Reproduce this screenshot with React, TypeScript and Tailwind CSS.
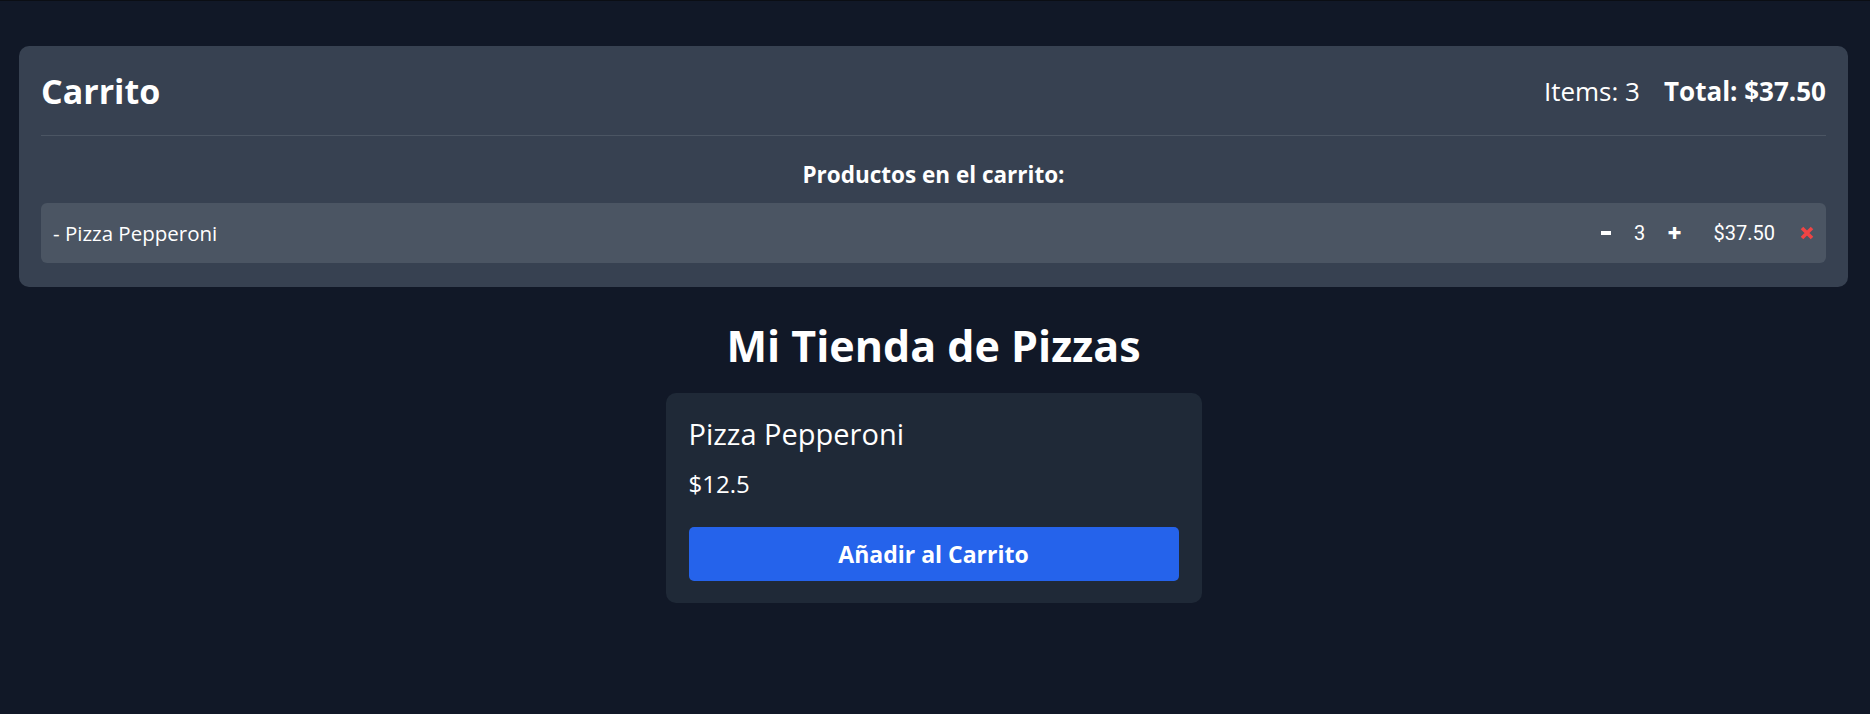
import React from "react";

type CartItem = { name: string; qty: number; price: number };

const cart: CartItem[] = [{ name: "Pizza Pepperoni", qty: 3, price: 12.5 }];

function RemoveIcon() {
    return (
        <svg width="14" height="14" viewBox="0 0 14 14" aria-hidden="true">
            <path d="M2 2 L12 12 M12 2 L2 12" stroke="#ef4444" strokeWidth="3.6" strokeLinecap="butt" />
        </svg>
    );
}

export default function App() {
    const items = cart.reduce((n, i) => n + i.qty, 0);
    const total = cart.reduce((n, i) => n + i.qty * i.price, 0);

    return (
        <div className="min-h-screen border-t border-[#0b0e14] bg-[#111827] pl-[19px] pr-[22px] pt-[45px] font-['Open_Sans',sans-serif] text-white">
            {/* carrito */}
            <div className="rounded-[10px] bg-[#374151] px-[22px] pt-[23px] pb-[24px]">
                <div className="flex h-[43px] items-center justify-between">
                    <h2 className="text-[34px] font-bold leading-none">Carrito</h2>
                    <div className="flex items-center gap-[24px] leading-none">
                        <span className="text-[26px] font-normal">Items: {items}</span>
                        <span className="text-[26px] font-bold">Total: ${total.toFixed(2)}</span>
                    </div>
                </div>
                <div className="mt-[23px] h-px bg-[#4b5563]" />
                <div className="mt-[24px] flex h-[29px] items-center justify-center text-[22.5px] font-bold">
                    Productos en el carrito:
                </div>
                {cart.map((item) => (
                    <div
                        key={item.name}
                        className="mt-[14px] flex h-[60px] items-center justify-between rounded-[6px] bg-[#4b5563] px-[12px]"
                    >
                        <span className="text-[20.5px]">- {item.name}</span>
                        <div className="flex items-center text-[20px]">
                            <button className="flex w-[12px] justify-center">
                                <span className="block h-[4px] w-[10px] bg-white" />
                            </button>
                            <span className="ml-[22px] w-[12px] text-center font-['Roboto',sans-serif]">{item.qty}</span>
                            <button className="ml-[22px] w-[12px] text-[24px] font-extrabold leading-none">+</button>
                            <span className="ml-[34px] font-['Roboto',sans-serif]">${(item.qty * item.price).toFixed(2)}</span>
                            <button className="ml-[25px] flex items-center">
                                <RemoveIcon />
                            </button>
                        </div>
                    </div>
                ))}
            </div>

            {/* tienda */}
            <h1 className="mt-[32px] flex h-[52px] items-center justify-center text-[43px] font-bold leading-none">
                Mi Tienda de Pizzas
            </h1>
            <div className="mx-auto mt-[22px] w-[536px] rounded-[10px] bg-[#1f2937] px-[23px] pt-[23px] pb-[22px]">
                <div className="flex h-[35px] items-center text-[29px]">Pizza Pepperoni</div>
                <div className="mt-[18px] flex h-[29px] items-center text-[24px]">$12.5</div>
                <button className="mt-[29px] flex h-[54px] w-full items-center justify-center rounded-[5px] bg-[#2563eb] text-[23px] font-bold">
                    Añadir al Carrito
                </button>
            </div>
        </div>
    );
}
